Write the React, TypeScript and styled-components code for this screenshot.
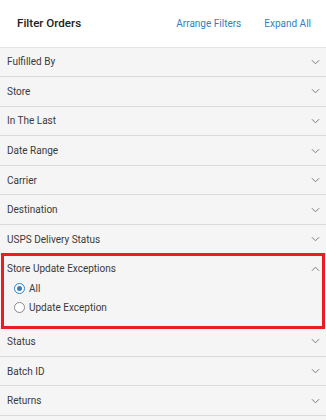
import styled, { createGlobalStyle } from 'styled-components';

const GlobalStyle = createGlobalStyle`
  html, body {
    margin: 0;
    padding: 0;
    background: #f5f5f5;
    font-family: Roboto, "Liberation Sans", Arial, sans-serif;
  }
`;

const filtersBefore = [
  'Fulfilled By',
  'Store',
  'In The Last',
  'Date Range',
  'Carrier',
  'Destination',
  'USPS Delivery Status',
];

const filtersAfter = ['Status', 'Batch ID', 'Returns'];

function Chevron({ up }: { up?: boolean }) {
  return (
    <ChevronIcon viewBox="0 0 10 6" $up={up}>
      <path d="M1 1l4 4 4-4" />
    </ChevronIcon>
  );
}

function App() {
  return (
    <>
      <GlobalStyle />
      <Panel>
        <Header>
          <Title>Filter Orders</Title>
          <Actions>
            <LinkButton>Arrange Filters</LinkButton>
            <LinkButton>Expand All</LinkButton>
          </Actions>
        </Header>

        {filtersBefore.map((label) => (
          <Row key={label}>
            <RowLabel>{label}</RowLabel>
            <Chevron />
          </Row>
        ))}

        <Expanded>
          <ExpandedHead>
            <RowLabel>Store Update Exceptions</RowLabel>
            <Chevron up />
          </ExpandedHead>
          <Options>
            <Option>
              <Radio $checked />
              <RowLabel>All</RowLabel>
            </Option>
            <Option>
              <Radio />
              <RowLabel>Update Exception</RowLabel>
            </Option>
          </Options>
        </Expanded>

        {filtersAfter.map((label) => (
          <Row key={label}>
            <RowLabel>{label}</RowLabel>
            <Chevron />
          </Row>
        ))}
      </Panel>
    </>
  );
}

export default App;

const Panel = styled.div`
  width: 326px;
  display: flex;
  flex-direction: column;
`;

const Header = styled.div`
  height: 47.5px;
  background: #fff;
  border-bottom: 1px solid #e4e4e4;
  display: flex;
  align-items: center;
  justify-content: space-between;
  padding: 0 15px 0 17px;
  box-sizing: border-box;
`;

const Title = styled.span`
  font-size: 11.6px;
  font-weight: 500;
  color: #222;
`;

const Actions = styled.div`
  display: flex;
  gap: 23px;
`;

const LinkButton = styled.span`
  font-size: 10px;
  color: #2f7fc6;
`;

const Row = styled.div`
  height: 29.6px;
  box-sizing: border-box;
  border-bottom: 1px solid #dadada;
  display: flex;
  align-items: center;
  justify-content: space-between;
  padding: 0 6px 0 7px;
`;

const RowLabel = styled.span`
  font-size: 10px;
  color: #3a3a3a;
`;

const ChevronIcon = styled.svg<{ $up?: boolean }>`
  width: 9px;
  height: 6px;
  fill: none;
  stroke: #7a7a7a;
  stroke-width: 1.1;
  transform: ${({ $up }) => ($up ? 'rotate(180deg)' : 'none')};
`;

const Expanded = styled.div`
  position: relative;
  height: 72.5px;
  box-sizing: border-box;
  border-bottom: 1px solid #dadada;
  padding: 0 6px 0 7px;
  display: flex;
  flex-direction: column;

  &::after {
    content: '';
    position: absolute;
    top: -2px;
    bottom: -3px;
    left: 1px;
    right: 1px;
    border: 3px solid #ec1c24;
    z-index: 1;
    pointer-events: none;
  }
`;

const ExpandedHead = styled.div`
  height: 28px;
  display: flex;
  align-items: center;
  justify-content: space-between;
  box-sizing: border-box;
`;

const Options = styled.div`
  display: flex;
  flex-direction: column;
  gap: 7px;
  padding-left: 7px;
`;

const Option = styled.label`
  display: flex;
  align-items: center;
  gap: 4px;
  height: 12px;
`;

const Radio = styled.span<{ $checked?: boolean }>`
  width: 11px;
  height: 11px;
  box-sizing: border-box;
  border-radius: 50%;
  border: 1px solid ${({ $checked }) => ($checked ? '#2f7fc6' : '#8a8a8a')};
  background: #fff;
  display: flex;
  align-items: center;
  justify-content: center;

  &::after {
    content: '';
    width: 5px;
    height: 5px;
    border-radius: 50%;
    background: ${({ $checked }) => ($checked ? '#2f7fc6' : 'transparent')};
  }
`;
